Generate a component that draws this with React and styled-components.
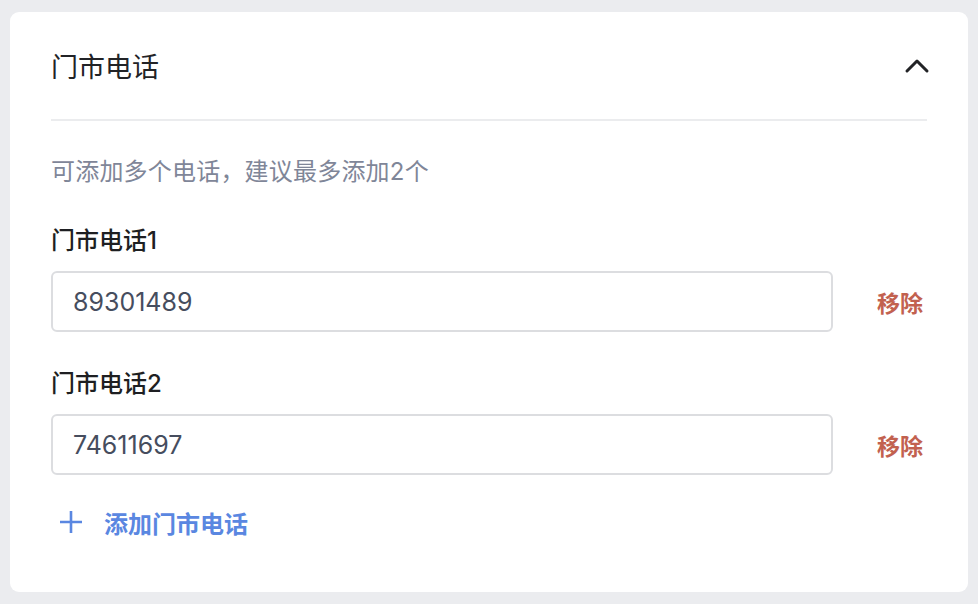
import React from "react";
import styled, { createGlobalStyle } from "styled-components";

const Global = createGlobalStyle`
  html, body { margin: 0; padding: 0; background: #ebecef; }
  body { font-family: "Inter", "Noto Sans CJK SC", sans-serif; }
  * { box-sizing: border-box; }
`;

const Page = styled.div`
  padding: 12px 10px;
  width: 978px;
  height: 604px;
`;

const Card = styled.section`
  background: #ffffff;
  border-radius: 9px;
  height: 580px;
  display: flex;
  flex-direction: column;
`;

const Header = styled.header`
  height: 107px;
  padding: 0 37px 0 41px;
  display: flex;
  align-items: center;
  justify-content: space-between;
`;

const Title = styled.h2`
  margin: 0;
  font-size: 27px;
  font-weight: 400;
  color: #222326;
  line-height: 34px;
  padding-top: 4px;
`;

const Toggle = styled.button`
  border: 0;
  background: none;
  padding: 0;
  display: flex;
  cursor: pointer;
`;

const Divider = styled.div`
  margin: 0 41px;
  height: 2px;
  background: #ebecee;
`;

const Body = styled.div`
  padding: 34px 41px 0 41px;
  display: flex;
  flex-direction: column;
`;

const Hint = styled.p`
  margin: 0 0 35px;
  font-size: 24px;
  line-height: 34px;
  color: #7f8698;
  font-weight: 400;
  letter-spacing: 0.2px;
`;

const Field = styled.div`
  display: flex;
  flex-direction: column;
  gap: 13px;
  margin-bottom: ${(p) => p.$mb}px;
`;

const Label = styled.label`
  font-size: 24px;
  line-height: 34px;
  font-weight: 500;
  color: #1e1f22;
`;

const Row = styled.div`
  display: flex;
  align-items: center;
  gap: 44px;
`;

const Input = styled.input`
  flex: 1;
  height: 61px;
  border: 2px solid #dcdde0;
  border-radius: 6px;
  padding: 0 20px;
  font-family: "Inter", "Noto Sans CJK SC", sans-serif;
  font-size: 25px;
  color: #464d5e;
  outline: none;
  background: #fff;
`;

const Remove = styled.button`
  border: 0;
  background: none;
  padding: 0;
  width: 50px;
  font-family: "Inter", "Noto Sans CJK SC", sans-serif;
  font-size: 23px;
  font-weight: 700;
  color: #c2614f;
  text-align: left;
  cursor: pointer;
`;

const AddButton = styled.button`
  border: 0;
  background: none;
  padding: 0 0 0 8px;
  height: 34px;
  display: flex;
  align-items: center;
  gap: 21px;
  font-family: "Inter", "Noto Sans CJK SC", sans-serif;
  font-size: 24px;
  font-weight: 700;
  color: #5a87e1;
  cursor: pointer;
`;

const phones = [
  { label: "门市电话1", value: "89301489" },
  { label: "门市电话2", value: "74611697" },
];

export default function App() {
  return (
    <Page>
      <Global />
      <Card>
        <Header>
          <Title>门市电话</Title>
          <Toggle aria-label="收起">
            <svg width="28" height="18" viewBox="0 0 28 18">
              <path d="M4 14 L14 4 L24 14" fill="none" stroke="#222326" strokeWidth="3" strokeLinecap="round" strokeLinejoin="round" />
            </svg>
          </Toggle>
        </Header>
        <Divider />
        <Body>
          <Hint>可添加多个电话，建议最多添加2个</Hint>
          {phones.map((p, i) => (
            <Field key={p.label} $mb={i === 0 ? 35 : 30}>
              <Label>{p.label}</Label>
              <Row>
                <Input defaultValue={p.value} />
                <Remove>移除</Remove>
              </Row>
            </Field>
          ))}
          <AddButton>
            <svg width="24" height="24" viewBox="0 0 24 24">
              <path d="M12 1 V23 M1 12 H23" stroke="#5a87e1" strokeWidth="2.6" fill="none" />
            </svg>
            添加门市电话
          </AddButton>
        </Body>
      </Card>
    </Page>
  );
}
